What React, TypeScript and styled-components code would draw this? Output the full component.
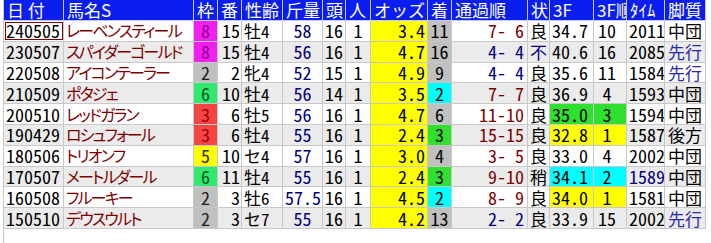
import React from "react";
import styled, { createGlobalStyle } from "styled-components";

const GlobalStyle = createGlobalStyle`
  html, body {
    margin: 0;
    padding: 0;
    background: #ffffff;
  }
  body {
    font-family: "Noto Sans CJK JP", "Liberation Sans", sans-serif;
  }
`;

const MAROON = "#800000";
const NAVY = "#000080";
const GRAY = "#c0c0c0";
const CYAN = "#00ffff";
const GREEN = "#2fe02f";
const YELLOW = "#ffff00";

const WAKU: Record<number, { bg: string; fg: string }> = {
  2: { bg: "#c0c0c0", fg: "#202020" },
  3: { bg: "#f44444", fg: "#a00000" },
  5: { bg: "#ffff00", fg: "#303000" },
  6: { bg: "#30ea70", fg: "#105a20" },
  8: { bg: "#f020f0", fg: "#9a009a" },
};

const Frame = styled.div`
  margin-left: 3px;
  height: 243px;
  border-left: 1px solid #c8c8c8;
  box-sizing: border-box;
`;

const Table = styled.table`
  border-collapse: collapse;
  table-layout: fixed;
  width: 702px;
  margin-left: -1px;
`;

const HeadCell = styled.th`
  background: #0a1ef0;
  color: #ffffff;
  font-weight: normal;
  font-size: 17px;
  line-height: 20px;
  height: 20px;
  padding: 0 0 0 3px;
  text-align: left;
  vertical-align: middle;
  white-space: nowrap;
  overflow: hidden;
  border: 1px solid #c8c8ff;
  border-top: none;
`;

const Row = styled.tr<{ $even: boolean }>`
  background: ${({ $even }) => ($even ? "#ebebeb" : "#ffffff")};
  height: 20.8px;
`;

const Cell = styled.td<{
  $align?: "left" | "right" | "center";
  $bg?: string;
  $fg?: string;
  $pr?: number;
  $pl?: number;
}>`
  border: 1px solid #c8c8c8;
  padding: 0 ${({ $pr }) => $pr ?? 2}px 0 ${({ $pl }) => $pl ?? 2}px;
  font-size: 18px;
  line-height: 19px;
  font-feature-settings: "hwid";
  vertical-align: middle;
  text-align: ${({ $align }) => $align ?? "left"};
  background: ${({ $bg }) => $bg ?? "transparent"};
  color: ${({ $fg }) => $fg ?? "#000000"};
  white-space: nowrap;
  overflow: hidden;
`;

const WordCell = styled(Cell)`
  font-size: 17px;
`;

const DateCell = styled(Cell)<{ $focus: boolean }>`
  outline: ${({ $focus }) => ($focus ? `1px solid ${MAROON}` : "none")};
  outline-offset: -2px;
`;

const NameCell = styled(Cell)`
  color: ${MAROON};
  font-size: 16px;
  font-feature-settings: "palt";
  letter-spacing: -1.8px;
`;

type Race = {
  date: string;
  name: string;
  waku: number;
  ban: number;
  sex: string;
  kin: string;
  tou: number;
  odds: string;
  chaku: string;
  chakuBg: string;
  pass: string;
  passFg: string;
  baba: string;
  f3: string;
  f3Bg?: string;
  f3r: string;
  time: string;
  timeFg?: string;
  style: string;
};

const races: Race[] = [
  { date: "240505", name: "レーベンスティール", waku: 8, ban: 15, sex: "牡4", kin: "58", tou: 16, odds: "3.4", chaku: "11", chakuBg: GRAY, pass: "7- 6", passFg: MAROON, baba: "良", f3: "34.7", f3r: "10", time: "2011", style: "中団" },
  { date: "230507", name: "スパイダーゴールド", waku: 8, ban: 15, sex: "牡4", kin: "56", tou: 16, odds: "4.7", chaku: "16", chakuBg: GRAY, pass: "4- 4", passFg: NAVY, baba: "不", f3: "40.6", f3r: "16", time: "2085", style: "先行" },
  { date: "220508", name: "アイコンテーラー", waku: 2, ban: 2, sex: "牝4", kin: "52", tou: 15, odds: "4.9", chaku: "9", chakuBg: GRAY, pass: "4- 4", passFg: NAVY, baba: "良", f3: "35.6", f3r: "11", time: "1584", style: "先行" },
  { date: "210509", name: "ポタジェ", waku: 6, ban: 10, sex: "牡4", kin: "56", tou: 14, odds: "3.5", chaku: "2", chakuBg: CYAN, pass: "7- 7", passFg: MAROON, baba: "良", f3: "36.9", f3r: "4", time: "1593", style: "中団" },
  { date: "200510", name: "レッドガラン", waku: 3, ban: 6, sex: "牡5", kin: "56", tou: 16, odds: "4.7", chaku: "6", chakuBg: GRAY, pass: "11-10", passFg: MAROON, baba: "良", f3: "35.0", f3Bg: GREEN, f3r: "3", time: "1594", style: "中団" },
  { date: "190429", name: "ロシュフォール", waku: 3, ban: 6, sex: "牡4", kin: "55", tou: 16, odds: "2.4", chaku: "3", chakuBg: GREEN, pass: "15-15", passFg: MAROON, baba: "良", f3: "32.8", f3Bg: YELLOW, f3r: "1", time: "1587", style: "後方" },
  { date: "180506", name: "トリオンフ", waku: 5, ban: 10, sex: "セ4", kin: "57", tou: 16, odds: "3.0", chaku: "4", chakuBg: GRAY, pass: "3- 5", passFg: MAROON, baba: "良", f3: "33.0", f3r: "4", time: "2002", style: "中団" },
  { date: "170507", name: "メートルダール", waku: 6, ban: 11, sex: "牡4", kin: "55", tou: 16, odds: "2.4", chaku: "3", chakuBg: GREEN, pass: "9-10", passFg: MAROON, baba: "稍", f3: "34.1", f3Bg: CYAN, f3r: "2", time: "1589", timeFg: NAVY, style: "中団" },
  { date: "160508", name: "フルーキー", waku: 2, ban: 3, sex: "牡6", kin: "57.5", tou: 16, odds: "4.5", chaku: "2", chakuBg: CYAN, pass: "8- 9", passFg: MAROON, baba: "良", f3: "34.0", f3Bg: YELLOW, f3r: "1", time: "1581", style: "中団" },
  { date: "150510", name: "デウスウルト", waku: 2, ban: 3, sex: "セ7", kin: "55", tou: 16, odds: "4.2", chaku: "13", chakuBg: GRAY, pass: "2- 2", passFg: NAVY, baba: "良", f3: "33.9", f3r: "15", time: "2002", style: "先行" },
];

const columns = [
  { id: "date", label: "日 付", width: 60 },
  { id: "name", label: "馬名S", width: 130 },
  { id: "waku", label: "枠", width: 24 },
  { id: "ban", label: "番", width: 24 },
  { id: "sex", label: "性齢", width: 41 },
  { id: "kin", label: "斤量", width: 40 },
  { id: "tou", label: "頭", width: 23 },
  { id: "nin", label: "人", width: 25 },
  { id: "odds", label: "オッズ", width: 57 },
  { id: "chaku", label: "着", width: 24 },
  { id: "pass", label: "通過順", width: 76 },
  { id: "baba", label: "状", width: 22 },
  { id: "f3", label: "3F", width: 44 },
  { id: "f3r", label: "3F順", width: 33 },
  { id: "time", label: "ﾀｲﾑ", width: 38 },
  { id: "style", label: "脚質", width: 41 },
];

export default function App() {
  return (
    <>
      <GlobalStyle />
      <Frame>
        <Table>
          <colgroup>
            {columns.map((c) => (
              <col key={c.id} style={{ width: c.width }} />
            ))}
          </colgroup>
          <thead>
            <tr>
              {columns.map((c) => (
                <HeadCell key={c.id}>{c.label}</HeadCell>
              ))}
            </tr>
          </thead>
          <tbody>
            {races.map((r, i) => (
              <Row key={r.date} $even={i % 2 === 1}>
                <DateCell $focus={i === 0}>{r.date}</DateCell>
                <NameCell>{r.name}</NameCell>
                <Cell $align="center" $bg={WAKU[r.waku].bg} $fg={WAKU[r.waku].fg}>
                  {r.waku}
                </Cell>
                <Cell $align="right" $pr={1}>{r.ban}</Cell>
                <WordCell>{r.sex}</WordCell>
                <Cell $align="center" $fg={NAVY}>{r.kin}</Cell>
                <Cell $align="center">{r.tou}</Cell>
                <Cell $align="center">1</Cell>
                <Cell $align="right" $bg={YELLOW}>{r.odds}</Cell>
                <Cell $align="center" $bg={r.chakuBg}>{r.chaku}</Cell>
                <Cell $align="right" $pr={3} $fg={r.passFg}>{r.pass}</Cell>
                <WordCell $align="center" $pl={1} $pr={1} $fg={r.baba === "不" ? NAVY : "#000"}>
                  {r.baba}
                </WordCell>
                <Cell $bg={r.f3Bg}>{r.f3}</Cell>
                <Cell $align="center" $pr={8} $bg={r.f3Bg}>{r.f3r}</Cell>
                <Cell $fg={r.timeFg}>{r.time}</Cell>
                <WordCell $pl={3} $fg={r.style === "先行" ? "#2a2ab0" : "#000"}>{r.style}</WordCell>
              </Row>
            ))}
          </tbody>
        </Table>
      </Frame>
    </>
  );
}
